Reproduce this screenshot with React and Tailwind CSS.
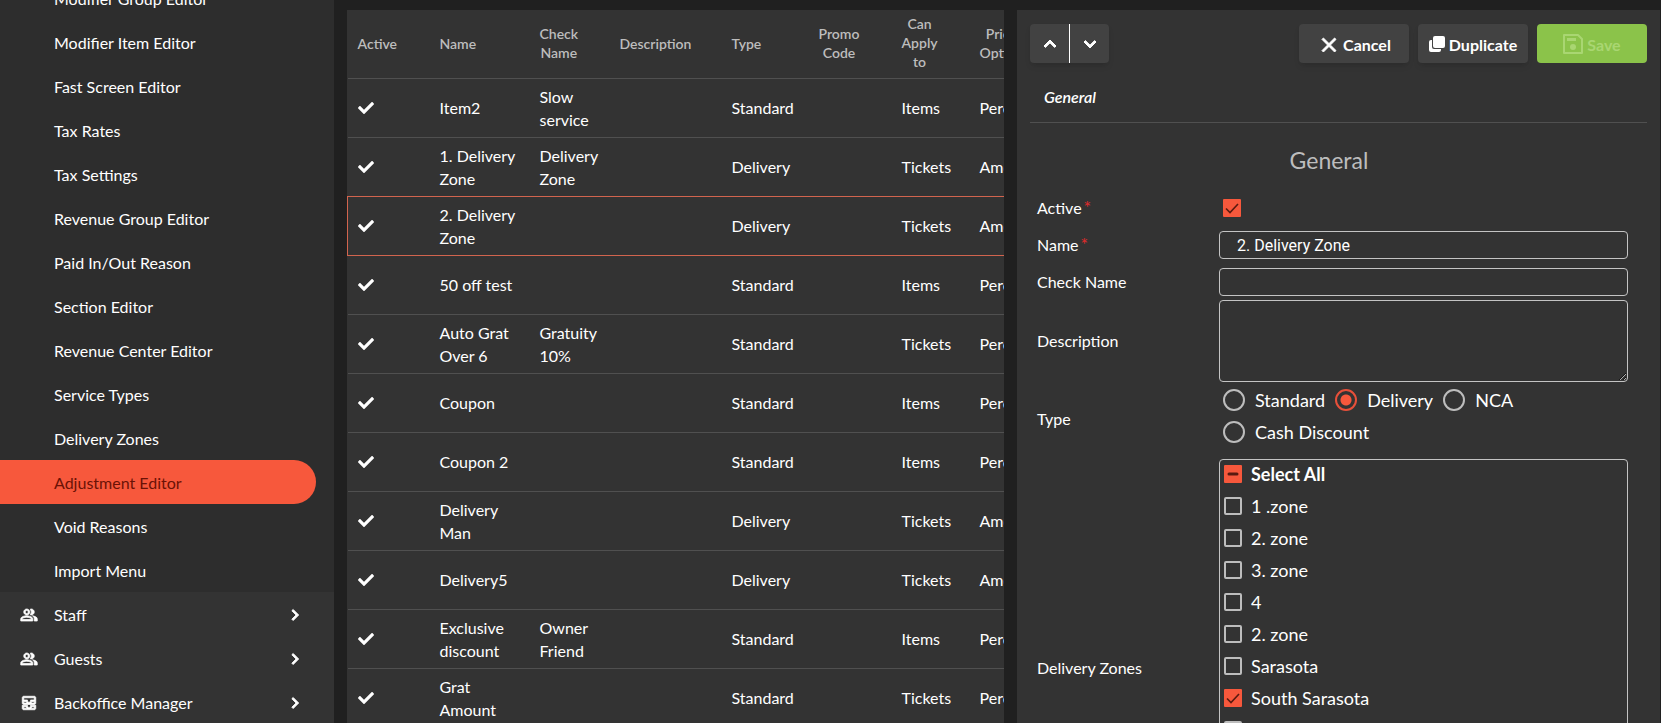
import { useState } from "react";
import clsx from "clsx";
import { FaCheck } from "react-icons/fa";
import {
  MdChevronRight,
  MdClose,
  MdExpandLess,
  MdExpandMore,
  MdOutlineAllInbox,
  MdOutlinePeopleAlt,
} from "react-icons/md";

const menuItems = [
  "Modifier Group Editor",
  "Modifier Item Editor",
  "Fast Screen Editor",
  "Tax Rates",
  "Tax Settings",
  "Revenue Group Editor",
  "Paid In/Out Reason",
  "Section Editor",
  "Revenue Center Editor",
  "Service Types",
  "Delivery Zones",
  "Adjustment Editor",
  "Void Reasons",
  "Import Menu",
];

const sections = [
  { label: "Staff", Icon: MdOutlinePeopleAlt },
  { label: "Guests", Icon: MdOutlinePeopleAlt },
  { label: "Backoffice Manager", Icon: MdOutlineAllInbox },
];

const columns = [
  { label: "Active", width: "w-[82px]" },
  { label: "Name", width: "w-[100px]" },
  { label: "Check\nName", width: "w-[80px]" },
  { label: "Description", width: "w-[112px]" },
  { label: "Type", width: "w-[87px]" },
  { label: "Promo\nCode", width: "w-[83px]" },
  { label: "Can\nApply\nto", width: "w-[78px]" },
  { label: "Price\nOption", width: "w-[100px]" },
];

const adjustments = [
  { name: "Item2", checkName: "Slow service", type: "Standard", applyTo: "Items", price: "Percent" },
  { name: "1. Delivery Zone", checkName: "Delivery Zone", type: "Delivery", applyTo: "Tickets", price: "Amount" },
  { name: "2. Delivery Zone", checkName: "", type: "Delivery", applyTo: "Tickets", price: "Amount", selected: true },
  { name: "50 off test", checkName: "", type: "Standard", applyTo: "Items", price: "Percent" },
  { name: "Auto Grat Over 6", checkName: "Gratuity 10%", type: "Standard", applyTo: "Tickets", price: "Percent" },
  { name: "Coupon", checkName: "", type: "Standard", applyTo: "Items", price: "Percent" },
  { name: "Coupon 2", checkName: "", type: "Standard", applyTo: "Items", price: "Percent" },
  { name: "Delivery Man", checkName: "", type: "Delivery", applyTo: "Tickets", price: "Amount" },
  { name: "Delivery5", checkName: "", type: "Delivery", applyTo: "Tickets", price: "Amount" },
  { name: "Exclusive discount", checkName: "Owner Friend", type: "Standard", applyTo: "Items", price: "Percent" },
  { name: "Grat Amount", checkName: "", type: "Standard", applyTo: "Tickets", price: "Percent" },
];

const types = ["Standard", "Delivery", "NCA", "Cash Discount"];

const initialZones = [
  { id: 1, label: "1 .zone", checked: false },
  { id: 2, label: "2. zone", checked: false },
  { id: 3, label: "3. zone", checked: false },
  { id: 4, label: "4", checked: false },
  { id: 5, label: "2. zone", checked: false },
  { id: 6, label: "Sarasota", checked: false },
  { id: 7, label: "South Sarasota", checked: true },
  { id: 8, label: "Test zone", checked: false },
];

// thicker strokes for the material icons, without outlining their empty bounds path
const boldIcon = "stroke-1 [&_[fill=none]]:stroke-0";

function DuplicateIcon() {
  return (
    <svg viewBox="0 0 16 16" className="size-4" fill="currentColor" aria-hidden="true">
      <rect x="4" y="0" width="12" height="12" rx="2" />
      <path d="M3 4v7a2 2 0 0 0 2 2h7v1a2 2 0 0 1-2 2H2a2 2 0 0 1-2-2V6a2 2 0 0 1 2-2z" />
    </svg>
  );
}

function SaveIcon() {
  return (
    <svg viewBox="0 0 20 20" className="size-5" fill="none" stroke="currentColor" strokeWidth="2" aria-hidden="true">
      <path d="M1 1h14l4 4v14H1z" strokeLinejoin="round" />
      <path d="M4 5.5h9" strokeWidth="3" />
      <circle cx="10" cy="13" r="3" fill="currentColor" stroke="none" />
    </svg>
  );
}

function Sidebar() {
  return (
    <nav className="overflow-hidden bg-[#333333]">
      <ul className="-mt-6 bg-[#2d2d2d]">
        {menuItems.map((item) => (
          <li key={item}>
            <a
              href="#"
              className={clsx(
                "flex h-11 items-center pt-0.5 pl-[54px]",
                item === "Adjustment Editor" && "mr-[18px] rounded-r-full bg-[#f7583c] text-[#6b1206]"
              )}
            >
              {item}
            </a>
          </li>
        ))}
      </ul>
      <ul>
        {sections.map(({ label, Icon }) => (
          <li key={label}>
            <a href="#" className="flex h-11 items-center pt-0.5 pr-7 pl-5">
              <Icon className={clsx("mr-4 size-[18px]", boldIcon)} />
              {label}
              <MdChevronRight className={clsx("ml-auto size-[22px]", boldIcon)} />
            </a>
          </li>
        ))}
      </ul>
    </nav>
  );
}

function AdjustmentTable() {
  return (
    <section className="mt-[10px] min-w-0 overflow-hidden bg-[#333333]">
      <table className="w-[722px] table-fixed border-collapse">
        <thead>
          <tr className="h-[68px] text-sm leading-[19px] text-[#bdbdbd]">
            {columns.map(({ label, width }) => (
              <th key={label} className={clsx("px-[10px] pb-0.5 text-left font-semibold", width)}>
                <span className="inline-block text-center align-middle whitespace-pre">{label}</span>
              </th>
            ))}
          </tr>
        </thead>
        <tbody>
          {adjustments.map((row) => (
            <tr
              key={row.name}
              className={clsx(
                "h-[59px] leading-[23px]",
                row.selected ? "border border-[#d2644e]" : "border-t border-[#505050]"
              )}
            >
              <td className="px-[10px]">
                <FaCheck className="size-4" aria-label="Active" />
              </td>
              <td className="px-[10px]">{row.name}</td>
              <td className="px-[10px]">{row.checkName}</td>
              <td className="px-[10px]" />
              <td className="px-[10px]">{row.type}</td>
              <td className="px-[10px]" />
              <td className="px-[10px]">{row.applyTo}</td>
              <td className="px-[10px]">{row.price}</td>
            </tr>
          ))}
        </tbody>
      </table>
    </section>
  );
}

function Checkbox({ id, checked, partial, onChange }) {
  return (
    <span className="grid size-[18px] shrink-0">
      <input
        id={id}
        type="checkbox"
        checked={checked}
        onChange={onChange}
        className={clsx(
          "col-start-1 row-start-1 size-[18px] appearance-none",
          checked || partial ? "rounded-[1px] bg-[#f7583c]" : "rounded-[2px] border-2 border-[#bdbdbd]"
        )}
      />
      {(checked || partial) && (
        <svg
          viewBox="0 0 18 18"
          className="pointer-events-none col-start-1 row-start-1 size-[18px]"
          fill="none"
          stroke="#5a1a10"
          strokeWidth={partial ? 3 : 1.6}
          aria-hidden="true"
        >
          <path d={partial ? "M5 9h8" : "M3 9.5l4 4L15 5"} strokeLinecap={partial ? "round" : "butt"} />
        </svg>
      )}
    </span>
  );
}

function Field({ label, htmlFor, required, className, children }) {
  return (
    <div className={clsx("flex items-center", className)}>
      <label htmlFor={htmlFor} className="w-[182px] shrink-0">
        {label}
        {required && <span className="ml-0.5 text-lg leading-5 text-[#e02b2b]">*</span>}
      </label>
      <div className="min-w-0 flex-1">{children}</div>
    </div>
  );
}

function Toolbar() {
  const button = "flex h-[39px] w-[110px] items-center justify-center gap-1 rounded font-bold";

  return (
    <div className="flex justify-between">
      <div className="flex rounded bg-[#424242] shadow-md">
        <button aria-label="Previous" className="flex h-[39px] w-10 items-center justify-center border-r border-white">
          <MdExpandLess className={clsx("size-6", boldIcon)} />
        </button>
        <button aria-label="Next" className="flex h-[39px] w-[39px] items-center justify-center">
          <MdExpandMore className={clsx("size-6", boldIcon)} />
        </button>
      </div>
      <div className="flex gap-[9px]">
        <button className={clsx(button, "bg-[#424242] shadow-md")}>
          <MdClose className={clsx("-mr-0.5 mt-0.5 size-6", boldIcon)} />
          <span className="mt-0.5">Cancel</span>
        </button>
        <button className={clsx(button, "bg-[#424242] shadow-md")}>
          <DuplicateIcon />
          <span className="mt-0.5">Duplicate</span>
        </button>
        <button disabled className={clsx(button, "bg-[#8bc34a] text-[#a9d672]")}>
          <SaveIcon />
          <span className="mt-0.5">Save</span>
        </button>
      </div>
    </div>
  );
}

export default function App() {
  const [active, setActive] = useState(true);
  const [type, setType] = useState("Delivery");
  const [zones, setZones] = useState(initialZones);

  const allChecked = zones.every((zone) => zone.checked);
  const someChecked = zones.some((zone) => zone.checked);

  const toggleZone = (id) =>
    setZones(zones.map((zone) => (zone.id === id ? { ...zone, checked: !zone.checked } : zone)));

  return (
    <div className="grid h-screen grid-cols-[334px_minmax(0,657fr)_minmax(0,643fr)] grid-rows-[minmax(0,1fr)] gap-x-[13px] overflow-hidden bg-[#202020] pr-px font-[Lato,sans-serif] text-base text-white">
      <Sidebar />
      <AdjustmentTable />

      <section className="mt-[10px] min-w-0 overflow-hidden bg-[#333333] px-[13px] pt-[14px]">
        <Toolbar />

        <div className="mt-3 border-b border-[#505050]">
          <button className="h-[47px] px-[14px] pb-1 font-semibold italic">General</button>
        </div>

        <h2 className="mt-[21px] pr-[19px] text-center text-[23px] leading-8 text-[#bdbdbd]">General</h2>

        <form className="mt-[9px] flex flex-col pr-[19px] pl-[7px]">
          <Field label="Active" htmlFor="active" required>
            <div className="flex h-[46px] items-center pl-1">
              <Checkbox id="active" checked={active} onChange={() => setActive(!active)} />
            </div>
          </Field>
          <Field label="Name" htmlFor="name" required className="mb-[9px]">
            <input
              id="name"
              defaultValue="2. Delivery Zone"
              className="block h-7 w-full rounded border border-[#c4c4c4] px-[17px] font-[Roboto,sans-serif]"
            />
          </Field>
          <Field label="Check Name" htmlFor="check-name">
            <input
              id="check-name"
              className="block h-7 w-full rounded border border-[#c4c4c4] px-[17px] font-[Roboto,sans-serif]"
            />
          </Field>
          <Field label="Description" htmlFor="description" className="mt-1">
            <textarea
              id="description"
              className="block h-[82px] w-full rounded border border-[#c4c4c4] px-[17px] font-[Roboto,sans-serif]"
            />
          </Field>
          <Field label="Type">
            <div className="flex flex-wrap gap-[10px] pt-[7px] pb-[13px] pl-1 text-lg leading-[22px]">
              {types.map((item) => (
                <label key={item} className="flex items-center gap-[10px]">
                  <input
                    type="radio"
                    name="type"
                    checked={type === item}
                    onChange={() => setType(item)}
                    className="size-[22px] appearance-none rounded-full border-2 border-[#bdbdbd] checked:border-[#e8503a] checked:bg-[radial-gradient(#f7583c_5px,transparent_6px)]"
                  />
                  {item}
                </label>
              ))}
            </div>
          </Field>
          <Field label="Delivery Zones" className="mt-[3px]">
            <div className="h-[418px] rounded border border-[#c4c4c4] text-lg">
              <label className="flex h-8 items-center gap-[9px] pb-1 pl-1 font-bold">
                <Checkbox
                  checked={allChecked}
                  partial={someChecked && !allChecked}
                  onChange={() => setZones(zones.map((zone) => ({ ...zone, checked: !allChecked })))}
                />
                Select All
              </label>
              {zones.map((zone) => (
                <label key={zone.id} className="flex h-8 items-center gap-[9px] pb-1 pl-1">
                  <Checkbox checked={zone.checked} onChange={() => toggleZone(zone.id)} />
                  {zone.label}
                </label>
              ))}
            </div>
          </Field>
        </form>
      </section>
    </div>
  );
}
